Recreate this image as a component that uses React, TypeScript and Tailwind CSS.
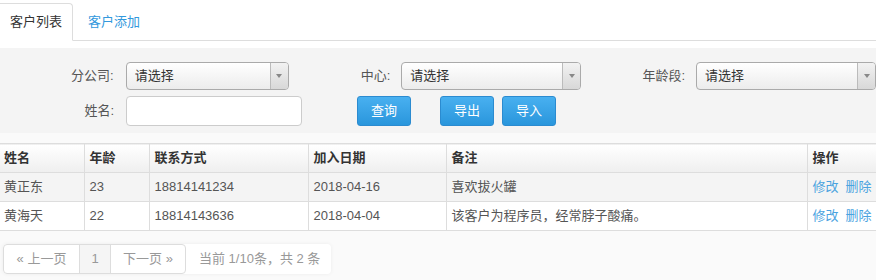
import React from 'react';

const rows = [
  { name: '黄正东', age: '23', phone: '18814141234', date: '2018-04-16', note: '喜欢拔火罐' },
  { name: '黄海天', age: '22', phone: '18814143636', date: '2018-04-04', note: '该客户为程序员，经常脖子酸痛。' },
];

function Select({ width }: { width: string }) {
  return (
    <div className={`flex h-[28px] ${width} overflow-hidden rounded-[4px] border border-[#aaa] bg-gradient-to-b from-white to-[#ececec]`}>
      <span className="flex-1 pl-[8px] leading-[26px] text-[#333]">请选择</span>
      <span className="flex w-[18px] items-center justify-center border-l border-[#bbb] bg-gradient-to-b from-[#f2f2f2] to-[#d8d8d8]">
        <span className="h-0 w-0 border-l-[3px] border-r-[3px] border-t-[4px] border-l-transparent border-r-transparent border-t-[#888]" />
      </span>
    </div>
  );
}

function Button({ label, className = '' }: { label: string; className?: string }) {
  return (
    <button className={`h-[30px] w-[54px] rounded-[3px] border border-[#2b8bd0] bg-gradient-to-b from-[#48b0f0] to-[#2996dc] text-white ${className}`}>
      {label}
    </button>
  );
}

export default function App() {
  return (
    <div className="w-[876px] bg-white text-[13px] text-[#555]" style={{ fontFamily: '"Liberation Sans", "Noto Sans CJK SC", sans-serif' }}>
      {/* Tabs */}
      <div className="flex h-[41px] border-b border-[#ddd] pt-[3px]">
        <div className="-mb-px flex h-[38px] items-center rounded-tr-[4px] border border-l-0 border-[#ddd] border-b-white bg-white px-[10px] text-[#333]">
          客户列表
        </div>
        <div className="flex h-[37px] items-center px-[15px] text-[#3399dd]">客户添加</div>
      </div>

      {/* Filters */}
      <div className="mt-[7px] h-[85px] bg-[#f4f4f4] pt-[14px]">
        <div className="flex h-[28px] items-center">
          <span className="w-[114px] text-right">分公司:</span>
          <div className="ml-[12px]">
            <Select width="w-[163px]" />
          </div>
          <span className="w-[102px] text-right">中心:</span>
          <div className="ml-[11px]">
            <Select width="w-[180px]" />
          </div>
          <span className="w-[104px] text-right">年龄段:</span>
          <div className="ml-[11px]">
            <Select width="w-[180px]" />
          </div>
        </div>
        <div className="mt-[6px] flex h-[30px] items-center">
          <span className="w-[114px] text-right">姓名:</span>
          <input className="ml-[12px] h-[30px] w-[176px] rounded-[4px] border border-[#ccc] bg-white px-2 outline-none" />
          <Button label="查询" className="ml-[55px]" />
          <Button label="导出" className="ml-[29px]" />
          <Button label="导入" className="ml-[8px]" />
        </div>
      </div>

      {/* Table */}
      <div className="bg-[#fafafa] pt-[10px] pb-[8px]">
        <table className="w-full table-fixed border-collapse bg-white">
          <colgroup>
            <col className="w-[84px]" />
            <col className="w-[65px]" />
            <col className="w-[159px]" />
            <col className="w-[138px]" />
            <col className="w-[361px]" />
            <col />
          </colgroup>
          <thead>
            <tr className="h-[29px] border-y border-[#ddd] bg-gradient-to-b from-white to-[#efefef] text-left font-bold text-[#333]">
              <th className="px-[4px]">姓名</th>
              <th className="border-l border-[#ddd] px-[5px]">年龄</th>
              <th className="border-l border-[#ddd] px-[5px]">联系方式</th>
              <th className="border-l border-[#ddd] px-[5px]">加入日期</th>
              <th className="border-l border-[#ddd] px-[5px]">备注</th>
              <th className="border-l border-[#ddd] px-[5px]">操作</th>
            </tr>
          </thead>
          <tbody>
            {rows.map((r, i) => (
              <tr key={r.phone} className={`h-[29px] border-b border-[#ddd] ${i === 0 ? 'bg-[#f4f4f4]' : 'bg-white'}`}>
                <td className="px-[4px]">{r.name}</td>
                <td className="border-l border-[#ddd] px-[5px]">{r.age}</td>
                <td className="border-l border-[#ddd] px-[5px]">{r.phone}</td>
                <td className="border-l border-[#ddd] px-[5px]">{r.date}</td>
                <td className="border-l border-[#ddd] px-[5px]">{r.note}</td>
                <td className="whitespace-nowrap border-l border-[#ddd] px-[5px] text-[#4aa3df]">
                  修改<span className="ml-[7px]">删除</span>
                </td>
              </tr>
            ))}
          </tbody>
        </table>

        {/* Pagination */}
        <div className="ml-[3px] mt-[13px] flex h-[30px] w-[328px] items-center rounded-[4px] bg-white text-[#999] shadow-[0_0_4px_rgba(0,0,0,0.06)]">
          <div className="flex h-full overflow-hidden rounded-[4px] border border-[#ddd]">
            <span className="flex w-[75px] items-center justify-center">« 上一页</span>
            <span className="flex w-[32px] items-center justify-center border-x border-[#ddd] bg-[#f5f5f5]">1</span>
            <span className="flex w-[74px] items-center justify-center">下一页 »</span>
          </div>
          <span className="ml-[13px]">当前 1/10条，共 2 条</span>
        </div>
      </div>
    </div>
  );
}
